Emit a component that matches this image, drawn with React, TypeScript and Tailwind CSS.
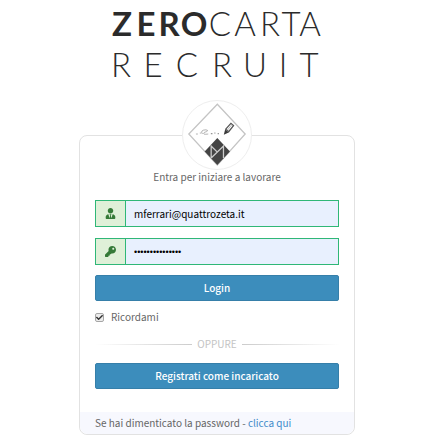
import { useState } from "react"
import type { ReactNode } from "react"
import { FaCheck, FaKey, FaUserTie } from "react-icons/fa"

function Wordmark() {
  return (
    <svg
      viewBox="0 0 216 84"
      className="mx-auto block w-[216px]"
      fontFamily="Lato, sans-serif"
      fontSize="33"
      textAnchor="middle"
      fill="#2b2b2b"
      role="img"
      aria-label="ZeroCarta Recruit"
    >
      <text x="13 37 60 85" y="35" fontWeight="700">ZERO</text>
      <text x="111 136 161 182 201" y="35" fontWeight="300">CARTA</text>
      <text x="12 44 78 113 146 174 200" y="76" fontWeight="300">RECRUIT</text>
    </svg>
  )
}

function Emblem() {
  return (
    <svg viewBox="0 0 210 210" className="block h-full w-full" fill="none" aria-hidden="true">
      <path d="M106 10 L192 102 L106 198 L18 102 Z" stroke="#c4c4c4" strokeWidth="4" />
      <path d="M106 114 L145 156 L106 198 L67 156 Z" fill="#444444" />
      <path d="M87 176 V139 L106 158 M87 176 L125 139 V176" stroke="#cccccc" strokeWidth="4" />
      <path d="M40 102 h6 M52 99 h4 M60 102 q-8-12 10-13 q14 2-4 8 q-8 8 12 5" stroke="#8a8a8a" strokeWidth="2" />
      <path d="M86 101 h5 M97 99 h3 M107 101 h4" stroke="#777777" strokeWidth="3" />
      <path d="M132 87 L148 69 L156 76 L141 95 Z" stroke="#555555" strokeWidth="4" />
      <path d="M137 90 L151 73" stroke="#999999" strokeWidth="2" />
      <path d="M126 104 L130 88 L141 97 Z" fill="#3a3a3a" />
    </svg>
  )
}

interface CredentialFieldProps {
  id: string
  label: string
  type: string
  value: string
  autoComplete: string
  icon: ReactNode
  inputClass: string
  onChange: (value: string) => void
}

function CredentialField({ id, label, type, value, autoComplete, icon, inputClass, onChange }: CredentialFieldProps) {
  return (
    <div className="flex h-[27px] border border-[#2fb777] bg-[#e8f0fe]">
      <label
        htmlFor={id}
        aria-label={label}
        className="flex items-center border-r border-[#2fb777] bg-[#dff0d8] px-[9px] text-[#357a38]"
      >
        {icon}
      </label>
      <input
        id={id}
        type={type}
        value={value}
        autoComplete={autoComplete}
        onChange={(e) => onChange(e.target.value)}
        className={`min-w-0 flex-1 px-2 text-black outline-none ${inputClass}`}
      />
    </div>
  )
}

const buttonClass =
  "block h-[26px] w-full rounded-[2px] border border-[#367fa9] bg-[#3c8dbc] text-[10px] leading-4 font-medium text-white"

export default function App() {
  const [email, setEmail] = useState("mferrari@quattrozeta.it")
  const [password, setPassword] = useState("quattrozeta2019")
  const [remember, setRemember] = useState(true)

  return (
    <main className="bg-white pr-[13px] pb-3 font-['Noto_Sans_CJK_SC',sans-serif] text-[10px] leading-4 text-[#666666]">
      <div className="mx-auto max-w-[276px] pt-px">
        <Wordmark />

        <section className="mt-[50px] rounded-lg border border-[#e2e2e2]">
          <div className="px-[15px] pb-[23px]">
            <div className="mx-auto -mt-9 h-[70px] w-[70px] overflow-hidden rounded-full border border-[#eeeeee] bg-white">
              <Emblem />
            </div>
            <p className="text-center leading-[14px]">Entra per iniziare a lavorare</p>

            <form className="mt-4" onSubmit={(e) => e.preventDefault()}>
              <div className="space-y-[11px]">
                <CredentialField
                  id="email"
                  label="Email"
                  type="email"
                  value={email}
                  autoComplete="username"
                  onChange={setEmail}
                  inputClass="text-[10px]"
                  icon={<FaUserTie className="h-[11px] w-[11px]" />}
                />
                <CredentialField
                  id="password"
                  label="Password"
                  type="password"
                  value={password}
                  autoComplete="current-password"
                  onChange={setPassword}
                  inputClass="font-['Liberation_Sans',sans-serif] text-[9px]"
                  icon={<FaKey className="h-[11px] w-[11px]" />}
                />
              </div>
              <button type="submit" className={`mt-[10px] ${buttonClass}`}>Login</button>

              <label className="mt-2 flex items-center gap-[7px]">
                <span className="relative flex">
                  <input
                    type="checkbox"
                    checked={remember}
                    onChange={(e) => setRemember(e.target.checked)}
                    className="peer h-[9px] w-[9px] appearance-none rounded-[2px] border border-[#a6a6a6] bg-[#ececec]"
                  />
                  <FaCheck className="pointer-events-none absolute inset-0 m-auto hidden h-[7px] w-[7px] text-[#333333] peer-checked:block" />
                </span>
                Ricordami
              </label>

              <div className="mt-[11px] flex items-center gap-[5px] text-[#c4c4c4]">
                <span className="h-px flex-1 bg-linear-to-r from-white to-[#cccccc]" />
                OPPURE
                <span className="h-px flex-1 bg-linear-to-l from-white to-[#cccccc]" />
              </div>

              <button type="button" className={`mt-[11px] ${buttonClass}`}>Registrati come incaricato</button>
            </form>
          </div>

          <footer className="rounded-b-lg bg-[#f7f8fe] px-[15px] py-[3px]">
            Se hai dimenticato la password - <a href="#recupero" className="text-[#428bca]">clicca qui</a>
          </footer>
        </section>
      </div>
    </main>
  )
}
